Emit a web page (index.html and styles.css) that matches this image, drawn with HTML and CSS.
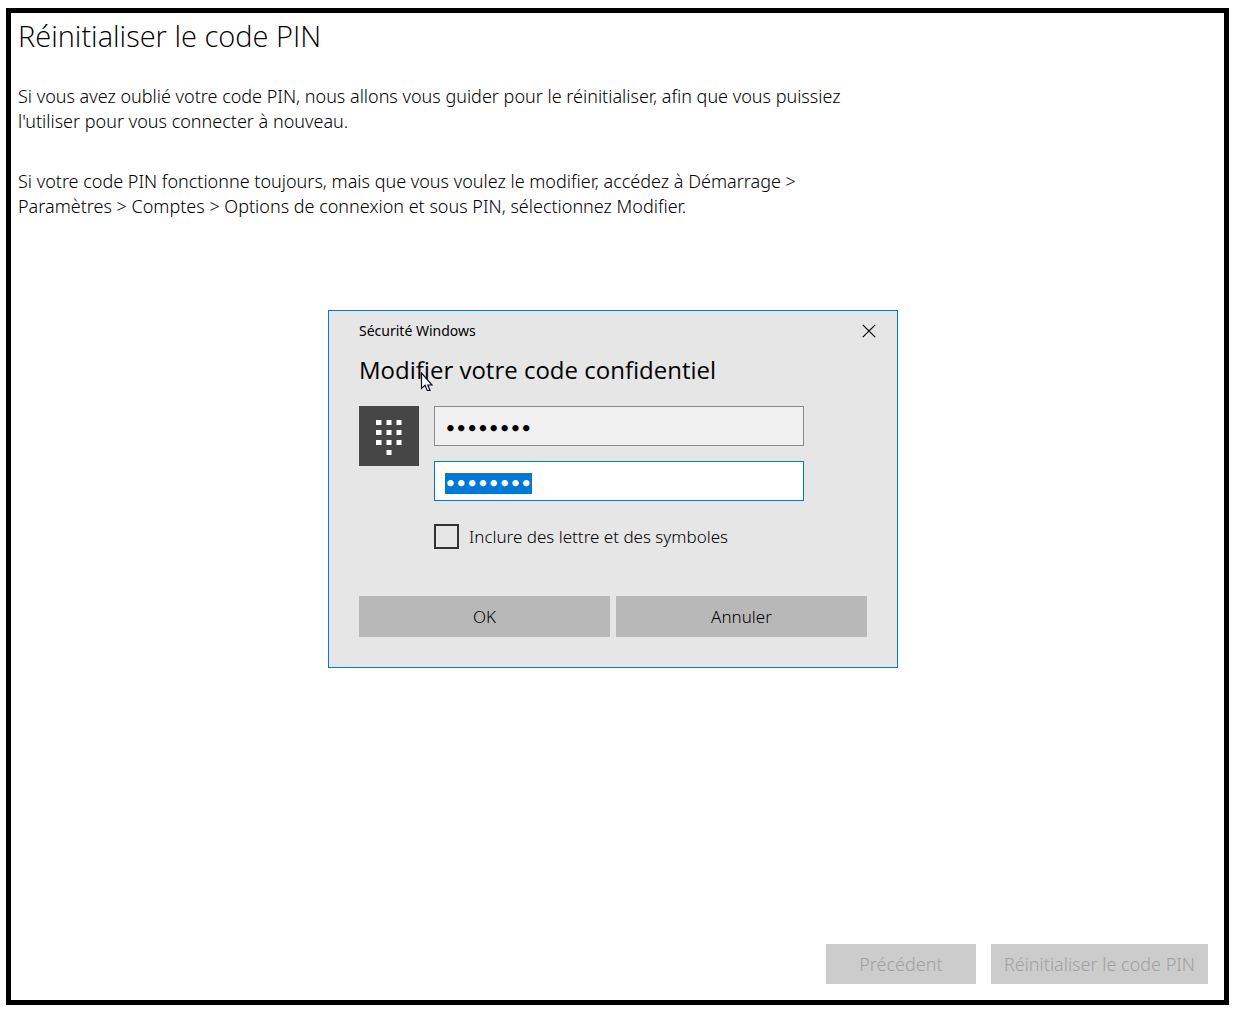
FILE: index.html
```html
<!DOCTYPE html>
<html lang="fr">
<head>
  <meta charset="utf-8">
  <meta name="viewport" content="width=device-width, initial-scale=1">
  <title>Réinitialiser le code PIN</title>
  <link rel="stylesheet" href="styles.css">
</head>
<body>
  <main class="window">
    <header class="intro">
      <h1 class="intro-title">Réinitialiser le code PIN</h1>
      <p class="intro-text">Si vous avez oublié votre code PIN, nous allons vous guider pour le réinitialiser, afin que vous puissiez<br>l'utiliser pour vous connecter à nouveau.</p>
      <p class="intro-text">Si votre code PIN fonctionne toujours, mais que vous voulez le modifier, accédez à Démarrage &gt;<br>Paramètres &gt; Comptes &gt; Options de connexion et sous PIN, sélectionnez Modifier.</p>
    </header>

    <form class="dialog" role="dialog" aria-labelledby="dialog-title">
      <div class="dialog-bar">
        <span>Sécurité Windows</span>
        <button class="close" type="button" aria-label="Fermer">
          <svg width="14" height="14" viewBox="0 0 14 14" fill="none" stroke="#000" stroke-width="1.2"><path d="M.8.8l12.4 12.4M13.2.8L.8 13.2"/></svg>
        </button>
      </div>
      <h2 class="dialog-title" id="dialog-title">Modifier votre code confidentiel
        <svg class="cursor" width="13" height="20" viewBox="0 0 13 20"><path d="M1.500 1v15.500l3.500-3.200 2.300 5.200h2.700l-2.200-5.500h4.200z" fill="#fff" stroke="#0a0a20" stroke-width="1.200"/></svg>
      </h2>
      <div class="dialog-body">
        <svg class="keypad" width="60" height="60" viewBox="0 0 60 60" fill="#fff">
          <rect width="60" height="60" fill="#464646"/>
          <path d="M17 14h5.500v5h-5.500zM27.500 14h5v5h-5zM37.500 14h5v5h-5zM17 24h5.500v5h-5.500zM27.500 24h5v5h-5zM37.500 24h5v5h-5zM17 34h5.500v5h-5.500zM27.500 34h5v5h-5zM37.500 34h5v5h-5zM27.500 44h5v5h-5z"/>
        </svg>
        <div class="fields">
          <input class="pin" type="password" value="12345678" aria-label="Nouveau code confidentiel">
          <input class="pin" id="confirm" type="password" value="12345678" aria-label="Confirmer le code confidentiel">
          <label class="option"><input class="option-box" type="checkbox">Inclure des lettre et des symboles</label>
        </div>
      </div>
      <div class="dialog-actions">
        <button class="button" type="submit">OK</button>
        <button class="button" type="button">Annuler</button>
      </div>
    </form>

    <footer class="actions">
      <button class="button back" type="button" disabled>Précédent</button>
      <button class="button" type="button" disabled>Réinitialiser le code PIN</button>
    </footer>
  </main>
  <script src="script.js"></script>
</body>
</html>
```
FILE: styles.css
```css
* {
  box-sizing: border-box;
}

body {
  margin: 0;
  padding: 8px 6px;
  min-height: 100vh;
  display: flex;
  background: #fff;
  color: #000;
  font: 300 18px/25px "Noto Sans", "Open Sans", sans-serif;
}

.window {
  flex: 1;
  display: flex;
  flex-direction: column;
  padding: 3px 16px 16px 7px;
  border: 5px solid #000;
}

.intro-title {
  margin: 0 0 28px;
  font: 300 29px/40px "Open Sans", sans-serif;
}

.intro-text {
  margin: 0 0 35px;
}

.dialog {
  width: 570px;
  max-width: 100%;
  margin: 56px auto 0;
  padding: 7px 30px 30px;
  border: 1px solid #0078d7;
  background: #e6e6e6;
  font-size: 17px;
}

.dialog-bar {
  display: flex;
  justify-content: space-between;
  align-items: center;
  height: 25px;
  font-size: 14px;
  font-weight: 400;
}

.close {
  display: flex;
  padding: 5px;
  margin-right: -14px;
  border: 0;
  background: none;
}

.dialog-title {
  position: relative;
  margin: 9px 0 18px;
  font: 400 24px/36px "Open Sans", sans-serif;
}

.cursor {
  position: absolute;
  left: 61px;
  top: 20px;
}

.dialog-body {
  display: flex;
  gap: 15px;
}

.keypad {
  flex: none;
}

.fields {
  flex: 1;
  display: flex;
  flex-direction: column;
  gap: 15px;
  padding-right: 63px;
}

.pin {
  width: 100%;
  height: 40px;
  padding: 4px 10px 0;
  border: 1px solid #8a8a8a;
  border-radius: 0;
  outline: 0;
  background: #f0f0f0;
  color: #000;
  font: 700 18px/24px "DejaVu Sans Mono", monospace;
}

.pin:focus {
  border-color: #0078d7;
  background: #fff;
}

.pin::selection {
  background: #0078d7;
  color: #fff;
}

.option {
  display: flex;
  align-items: center;
  gap: 10px;
  height: 40px;
}

.option-box {
  appearance: none;
  width: 25px;
  height: 25px;
  margin: 0;
  border: 2px solid #333;
}

.dialog-actions {
  display: grid;
  grid-template-columns: 1fr 1fr;
  gap: 6px;
  margin-top: 40px;
}

.button {
  height: 40px;
  padding: 0 13px;
  border: 0;
  background: #b8b8b8;
  color: #000;
  font: inherit;
}

.dialog-actions .button {
  height: 41px;
}

.actions {
  display: flex;
  justify-content: flex-end;
  gap: 15px;
  margin-top: auto;
}

.actions .button {
  background: #ccc;
  color: #a0a0a0;
}

.actions .back {
  width: 150px;
}
```
FILE: script.js
```js
const confirmField = document.getElementById("confirm");
confirmField.focus();
confirmField.select();
```
